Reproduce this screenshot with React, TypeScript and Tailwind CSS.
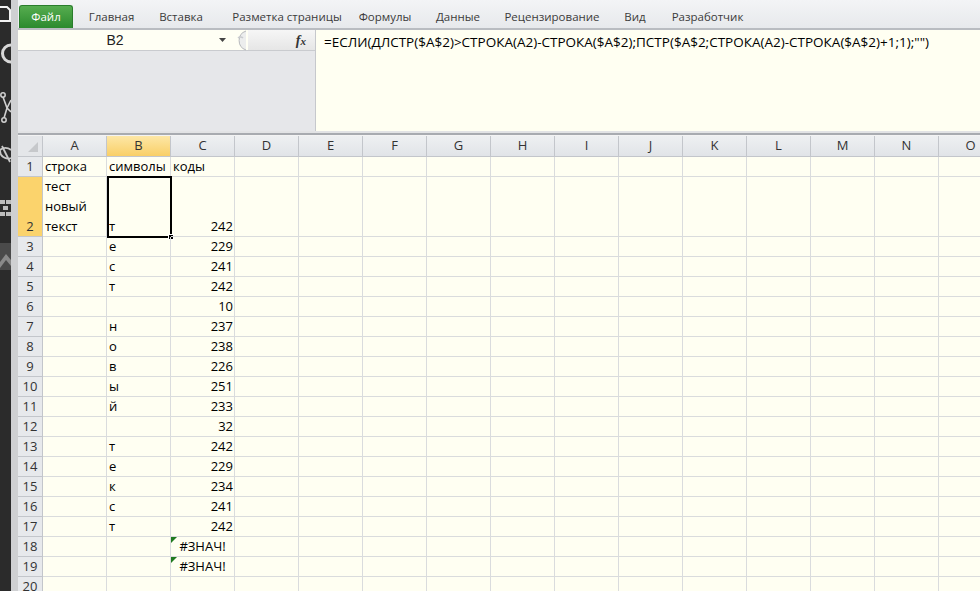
import React from "react";

const cols = ["A","B","C","D","E","F","G","H","I","J","K","L","M","N","O"];

type Row = { n: number; h: number; a?: string[]; b?: string; c?: string; err?: boolean };

const rows: Row[] = [
  { n: 1, h: 20, a: ["строка"], b: "символы", c: "коды" },
  { n: 2, h: 60, a: ["тест", "новый", "текст"], b: "т", c: "242" },
  { n: 3, h: 20, b: "е", c: "229" },
  { n: 4, h: 20, b: "с", c: "241" },
  { n: 5, h: 20, b: "т", c: "242" },
  { n: 6, h: 20, c: "10" },
  { n: 7, h: 20, b: "н", c: "237" },
  { n: 8, h: 20, b: "о", c: "238" },
  { n: 9, h: 20, b: "в", c: "226" },
  { n: 10, h: 20, b: "ы", c: "251" },
  { n: 11, h: 20, b: "й", c: "233" },
  { n: 12, h: 20, c: "32" },
  { n: 13, h: 20, b: "т", c: "242" },
  { n: 14, h: 20, b: "е", c: "229" },
  { n: 15, h: 20, b: "к", c: "234" },
  { n: 16, h: 20, b: "с", c: "241" },
  { n: 17, h: 20, b: "т", c: "242" },
  { n: 18, h: 20, c: "#ЗНАЧ!", err: true },
  { n: 19, h: 20, c: "#ЗНАЧ!", err: true },
  { n: 20, h: 20 },
];

const tabs = [
  { t: "Главная", w: "w-[77px]" },
  { t: "Вставка", w: "w-[62px]" },
  { t: "Разметка страницы", w: "w-[150px]" },
  { t: "Формулы", w: "w-[46px]" },
  { t: "Данные", w: "w-[100px]" },
  { t: "Рецензирование", w: "w-[88px]" },
  { t: "Вид", w: "w-[78px]" },
  { t: "Разработчик", w: "w-[67px]" },
];

function SideStrip() {
  return (
    <div className="w-[11px] h-full bg-[#2b2b2b] flex flex-col items-start overflow-hidden shrink-0">
      <svg width="11" height="300" viewBox="0 0 11 300">
        <path d="M0 7 H7 L10 10 V21 H0" fill="none" stroke="#f2f2f2" strokeWidth="2" />
        <path d="M11 45 A7 7 0 1 0 11 62" fill="none" stroke="#d8d8d8" strokeWidth="3" />
        <circle cx="3" cy="95" r="2.2" fill="none" stroke="#d0d0d0" strokeWidth="1.5" />
        <circle cx="4" cy="120" r="2.2" fill="none" stroke="#d0d0d0" strokeWidth="1.5" />
        <path d="M3 97 L7 108 L11 100 M7 108 L4 118 M7 108 L11 112" fill="none" stroke="#d0d0d0" strokeWidth="1.6" />
        <path d="M0 150 A8 8 0 0 1 11 150 M0 150 A8 8 0 0 0 11 158 M2 146 L10 162" fill="none" stroke="#c8c8c8" strokeWidth="1.8" />
        <rect x="0" y="200" width="5" height="4" fill="#bdbdbd" />
        <rect x="6" y="200" width="5" height="4" fill="#bdbdbd" />
        <rect x="3" y="206" width="5" height="4" fill="#bdbdbd" />
        <rect x="0" y="212" width="5" height="4" fill="#bdbdbd" />
        <rect x="6" y="212" width="5" height="4" fill="#bdbdbd" />
        <rect x="0" y="243" width="11" height="27" fill="#4a4a4a" />
        <path d="M0 262 L6 254 L11 260 V266 L6 260 L0 268 Z" fill="#8a8a8a" />
      </svg>
    </div>
  );
}

export default function App() {
  return (
    <div className="w-[980px] h-[591px] overflow-hidden flex bg-[#c8c9cb] font-['Open_Sans',sans-serif]">
      <SideStrip />
      <div className="w-[7px] h-full bg-[#cfd0d2] shrink-0" />
      <div className="flex-1 flex flex-col overflow-hidden min-w-0">
        {/* Ribbon tabs */}
        <div className="h-[28px] bg-[linear-gradient(#f3f4f6,#e7e9ec)] flex items-end shrink-0">
          <div className="ml-[1px] w-[54px] h-[23px] rounded-t-[3px] bg-[linear-gradient(#56ad4f,#2c8a2e)] border border-[#2a7d2c] border-b-0 flex items-center justify-center text-white text-[11.5px] shrink-0">
            Файл
          </div>
          {tabs.map((t) => (
            <div key={t.t} className={`${t.w} h-[23px] flex items-center justify-center text-[11.5px] text-[#3b3b3b] shrink-0 whitespace-nowrap`}>
              {t.t}
            </div>
          ))}
        </div>
        <div className="h-[2px] bg-[#b9bcc1] shrink-0" />
        {/* Formula area */}
        <div className="h-[101px] flex shrink-0 bg-[#fffff2]">
          <div className="w-[298px] flex flex-col bg-[#e6e7ea] border-r border-[#c6c8cc]">
            <div className="h-[21px] flex items-center bg-[#fffff4] border-b border-[#c9cbcf]">
              <div className="w-[194px] text-center text-[14px] text-[#222] font-['Liberation_Sans',sans-serif]">B2</div>
              <svg width="10" height="6" viewBox="0 0 10 6" className="ml-[6px]"><path d="M1 1 H8 L4.5 5 Z" fill="#444" /></svg>
              <div className="ml-[4px] w-[16px] h-[21px] flex items-center">
                <svg width="16" height="21" viewBox="0 0 16 21">
                  <path d="M14 1 A10 10 0 0 0 14 20" fill="#eceded" stroke="#b7b9bc" strokeWidth="1" />
                  <path d="M6 8 A3 2 0 0 1 11 8" fill="none" stroke="#c9cbce" strokeWidth="1.5" />
                </svg>
              </div>
              <div className="flex-1 h-full bg-[linear-gradient(#f6f6f6,#e6e6e6)] flex items-center justify-end pr-[9px]">
                <span className="italic font-bold text-[14px] text-[#333] font-['Liberation_Serif',serif]">f<span className="text-[11px]">x</span></span>
              </div>
            </div>
            <div className="flex-1" />
          </div>
          <div className="flex-1 pl-[8px] pt-[2px] text-[13.5px] text-black font-['Open_Sans',sans-serif] whitespace-nowrap leading-[20px]">
            =ЕСЛИ(ДЛСТР($A$2)&gt;СТРОКА(A2)-СТРОКА($A$2);ПСТР($A$2;СТРОКА(A2)-СТРОКА($A$2)+1;1);"")
          </div>
        </div>
        {/* separator */}
        <div className="h-[2px] bg-[#e2e3e5] shrink-0" />
        <div className="h-[2px] bg-[#a8abb0] shrink-0" />
        <div className="h-[1px] bg-[#f3f3f3] shrink-0" />
        {/* Grid */}
        <div className="flex-1 overflow-hidden bg-[#fffff2]">
          <div className="grid grid-cols-[25px_repeat(15,64px)] w-max text-[13px] text-black">
            <div className="h-[21px] bg-[#e4e6e9] border-r border-b border-[#c3c6cb] relative">
              <svg width="12" height="12" viewBox="0 0 12 12" className="absolute right-[3px] bottom-[3px]"><path d="M11 1 V11 H1 Z" fill="#c6c8cb" /></svg>
            </div>
            {cols.map((c) => (
              <div
                key={c}
                className={`h-[21px] border-r border-b border-[#c3c6cb] flex items-center justify-center text-[13px] text-[#333] ${c === "B" ? "bg-[linear-gradient(#fde7a6,#f9cf67)]" : "bg-[linear-gradient(#eef0f2,#e1e4e8)]"}`}
              >
                {c}
              </div>
            ))}
            {rows.map((r) => (
              <React.Fragment key={r.n}>
                <div
                  className={`border-r border-b border-[#c3c6cb] flex items-end justify-center text-[13px] text-[#333] leading-[19px] ${r.n === 2 ? "bg-[#fbd36c]" : "bg-[#e7e9ec]"}`}
                  style={{ height: r.h }}
                >
                  {r.n}
                </div>
                {cols.map((c) => {
                  let content: React.ReactNode = null;
                  let align = "justify-start pl-[2px]";
                  if (c === "A" && r.a) content = r.a.map((l, i) => <div key={i} className="leading-[20px]">{l}</div>);
                  if (c === "B" && r.b) content = <div className="leading-[19px]">{r.b}</div>;
                  if (c === "C" && r.c) {
                    content = <div className="leading-[19px]">{r.c}</div>;
                    align = r.err ? "justify-center" : r.n === 1 ? "justify-start pl-[2px]" : "justify-end pr-[1px]";
                  }
                  return (
                    <div
                      key={c}
                      className={`relative border-r border-b border-[#dadcdd] flex ${c === "A" ? "flex-col justify-end pl-[2px]" : `items-end ${align}`}`}
                      style={{ height: r.h }}
                    >
                      {content}
                      {c === "B" && r.n === 2 && (
                        <div className="absolute left-0 top-[-1px] right-[-2px] bottom-[-2px] border-2 border-black">
                          <div className="absolute right-[-4px] bottom-[-4px] w-[6px] h-[6px] bg-black border border-white" />
                        </div>
                      )}
                      {c === "C" && r.err && (
                        <svg width="6" height="6" viewBox="0 0 6 6" className="absolute left-0 top-0"><path d="M0 0 H6 L0 6 Z" fill="#1f7a1f" /></svg>
                      )}
                    </div>
                  );
                })}
              </React.Fragment>
            ))}
          </div>
        </div>
      </div>
    </div>
  );
}
